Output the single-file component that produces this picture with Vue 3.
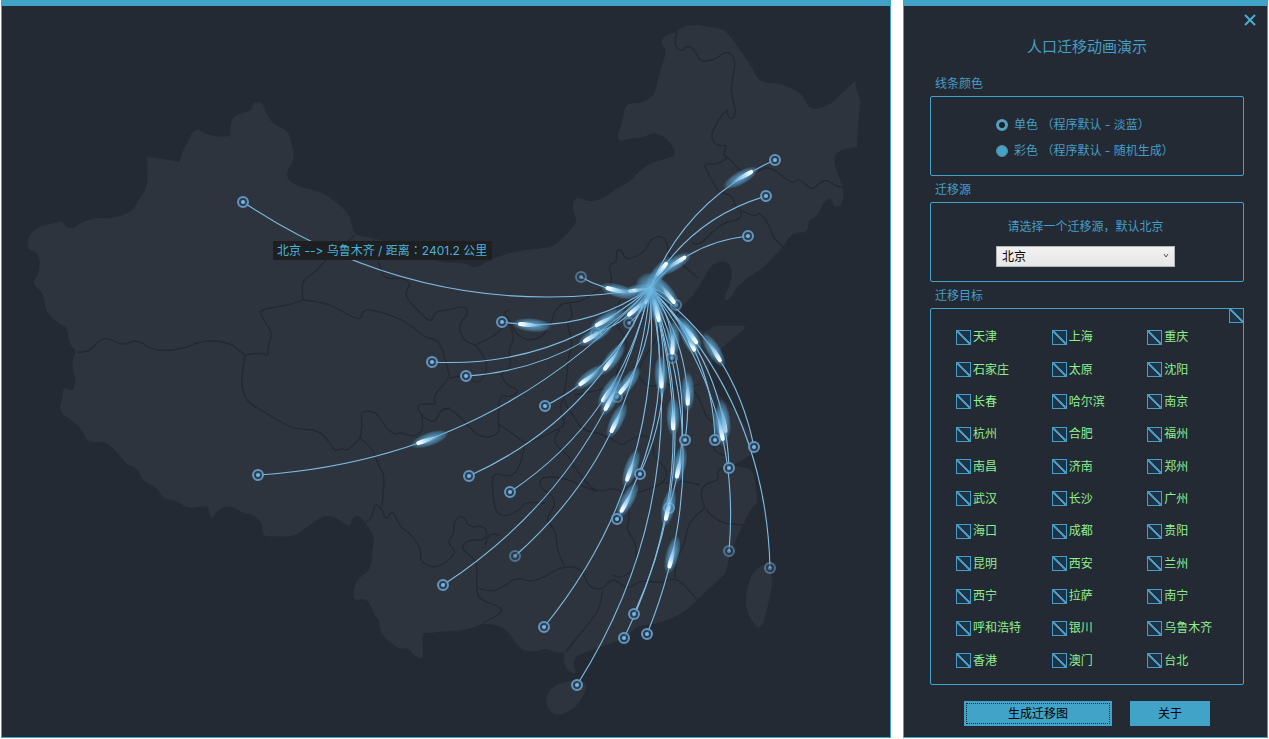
<script setup>
import { ref } from 'vue'

const ORIGIN = [650, 288]

// Turns "x,y x,y ..." into a softly rounded path through the segment midpoints.
function smooth(text, closed = false) {
  const p = text.trim().split(/\s+/).map((s) => s.split(',').map(Number))
  const mid = (a, b) => [(a[0] + b[0]) / 2, (a[1] + b[1]) / 2]
  if (closed) {
    const start = mid(p[p.length - 1], p[0])
    let d = `M${start}`
    p.forEach((pt, i) => {
      d += `Q${pt} ${mid(pt, p[(i + 1) % p.length])}`
    })
    return d + 'Z'
  }
  let d = `M${p[0]}`
  for (let i = 1; i < p.length - 1; i++) d += `Q${p[i]} ${mid(p[i], p[i + 1])}`
  return d + `L${p[p.length - 1]}`
}

const land = [
  `27,250 28,237 37,227 50,224 63,221 65,227 72,229 80,223 97,217 107,219 125,215 135,208 140,197 147,188 148,172 147,157 147,157 165,159 180,162 180,162 182,152 188,142 191,134 197,128 205,134 218,137 230,136 230,136 231,118 242,113 251,111 253,103 258,102 263,103 266,113 273,124 283,128 289,133 291,143 294,153 293,163 287,170 287,180 300,187 323,192 337,203 348,213 352,225 355,235 373,238 395,244 420,256 445,263 466,263 475,269 493,258 520,250 553,248 568,233 578,220 573,213 573,200 580,197 588,202 603,199 617,188 630,182 640,170 653,162 673,157 676,152 670,143 665,137 653,132 643,138 630,138 620,142 617,135 622,125 625,103 643,103 655,95 658,78 662,65 667,50 660,43 665,35 677,32 682,27 695,24 707,27 722,28 732,38 740,50 752,67 760,83 780,83 802,93 807,105 813,110 830,105 842,93 855,81 855,81 857,93 861,100 858,123 857,147 857,147 838,150 833,160 840,180 844,188 842,207 833,207 832,198 825,200 817,217 808,220 808,233 793,232 783,247 773,257 763,268 747,278 737,287 728,302 723,298 730,285 733,273 728,262 718,261 710,267 703,280 697,290 687,302 680,308 680,318 693,328 707,333 713,325 730,326 746,325 744,330 727,343 717,353 708,368 708,380 718,395 735,410 745,425 754,440 756,450 747,458 730,466 753,468 755,483 758,503 752,507 743,525 737,537 728,560 727,572 713,585 697,600 687,610 673,618 653,625 637,625 627,637 607,645 583,653 575,657 573,665 577,673 570,673 563,663 565,652 557,653 545,648 537,652 520,650 512,637 503,626 483,623 468,630 453,631 437,632 430,633 422,633 423,647 423,660 413,655 408,647 400,650 380,635 380,620 375,617 368,598 354,601 353,590 358,578 371,570 372,550 375,537 365,522 358,515 352,518 350,527 342,522 327,513 307,527 293,537 280,536 262,537 263,525 255,515 245,514 230,505 217,510 212,521 209,513 208,505 187,509 177,500 163,499 157,487 143,482 137,467 127,465 117,452 105,441 87,443 80,425 58,412 63,397 63,386 73,392 76,380 72,367 73,357 77,352 68,342 68,327 57,323 45,310 44,293 31,283 40,273 39,252`,
  `577,680 588,684 583,697 575,708 560,716 548,711 545,697 553,686 565,682`,
  `768,563 773,580 770,597 762,629 754,625 745,608 747,585 756,568`,
].map((s) => smooth(s, true))

const borders = [
  `77,352 88,353 97,342 107,337 122,346 137,339 155,352 187,348 200,341 227,341 245,355`,
  `245,355 262,352 268,357 268,345 273,333 260,315 262,309 285,306 303,300`,
  `303,300 301,285 307,277 318,270 327,258 340,248 355,235`,
  `303,300 325,302 345,313 361,321 363,308 385,313 407,322 425,338 440,340 448,370 450,378 432,397 438,405 416,403 420,415 435,424 440,410 450,408`,
  `373,238 378,262 385,280 400,277 412,283 403,295 425,318 432,322 435,311 450,310 463,306 470,312 458,325 463,340 475,345`,
  `245,355 242,372 242,390 248,403 265,412 280,422 295,429 318,430 328,440 335,452 341,448 348,451 360,438`,
  `360,438 363,423 360,411 376,411 385,427 395,435 401,432 412,437 423,432 422,415`,
  `360,438 373,448 378,465 385,475 382,505`,
  `365,522 372,520 374,504 381,506 386,522 392,509 400,527 410,533 422,550 419,560 433,569 450,560 456,550 447,543 455,532 453,522 463,514 469,528 485,525 488,540 466,540 461,550 478,560 476,590 480,600 503,608 500,614 483,623`,
  `677,32 673,45 682,52 687,45 695,50 700,62 715,60 727,50 736,60 732,80 731,95 736,110 733,120 727,116 728,108 718,120 710,137 717,146 728,145 722,155 732,160 738,170 752,176 766,166 778,172 793,185 798,177 812,191 820,182 828,180 835,186 844,188`,
  `728,157 718,166 702,162 712,180 718,192 732,195 736,208 742,211 740,220 725,222 712,232 700,245 692,243`,
  `742,211 756,218 759,211 770,226 772,236 783,247`,
  `570,305 574,318 566,320 573,345 568,357 567,380 562,400 575,418 582,430 600,433 622,445`,
  `608,290 613,282 608,265 617,262 616,250 622,250 626,261 645,252 650,240 661,235 668,243 667,255 683,265 698,278`,
  `613,284 600,288 585,300 570,303 563,303 555,310 551,325 538,341 518,338 508,318 503,312 510,310`,
  `475,345 487,340 502,330 508,320 515,338 508,350 512,368 500,372 506,385 520,390 510,398 500,393 498,420 500,435 480,438 468,425 458,415 447,407 440,412`,
  `475,345 484,355 488,370 478,385 465,375 450,378`,
  `497,423 515,435 525,444 540,438 556,430 566,425 560,410 562,400`,
  `525,444 522,462 512,478 493,472 492,487 495,512 505,517 520,510 525,502 545,503`,
  `560,430 550,440 568,455 575,468 590,487 600,493 580,485 562,477 540,477 540,488 552,495 556,505 545,520 556,530 557,550 564,565`,
  `580,485 600,493 614,487 628,496 640,492 665,483 668,470 652,455 655,448 645,432 622,445`,
  `628,500 630,520 626,530 637,543 635,570 620,578 612,575`,
  `478,588 490,592 500,589 517,577 530,582 545,577 562,566 582,568 588,587 603,590 612,577 628,590 640,580 660,583 675,578 685,585 697,600`,
  `603,590 600,608 590,622 575,640 566,652`,
  `675,578 675,562 685,543 688,525 698,513 706,509 700,495 704,484 720,480 716,470 730,467`,
  `706,509 716,523 743,525`,
  `665,483 680,480 700,485`,
  `690,385 700,398 706,418 716,424 718,440 712,450 725,456`,
  `680,310 668,322 655,340 640,365 638,378 650,388 665,382 680,390 700,384`,
  `620,300 612,320 625,335 628,350 618,365 615,385 600,390 575,395`,
  `485,545 488,533 500,535`,
].map((s) => smooth(s))

// Every arc bulges to the left of its travel direction, with one shared curvature.
const BULGE = 0.1
const routeData = [
  ['乌鲁木齐', 243, 202, 0.05], ['拉萨', 258, 475, 0.64], ['呼和浩特', 581, 277, 0.63],
  ['银川', 502, 322, 0.9], ['西宁', 432, 362, 0.28], ['兰州', 466, 376, 0.41],
  ['西安', 545, 406, 0.76], ['成都', 469, 476, 0.35], ['重庆', 510, 492, 0.49],
  ['贵阳', 515, 556, 0.49], ['昆明', 443, 585, 0.35], ['南宁', 544, 627, 0.54],
  ['海口', 577, 685, 0.24], ['长沙', 617, 519, 0.97], ['武汉', 640, 474, 0.18],
  ['郑州', 617, 397, 0.97], ['广州', 634, 614, 0.71], ['澳门', 624, 638, 0.4],
  ['香港', 647, 634, 0.81], ['南昌', 669, 508, 0.87], ['合肥', 685, 440, 0.79],
  ['济南', 672, 358, 0.96], ['南京', 715, 440, 0.46], ['杭州', 729, 468, 0.83],
  ['福州', 729, 551, 0.61], ['上海', 754, 447, 0.53], ['台北', 770, 568, 0.23],
  ['沈阳', 748, 236, 0.42], ['长春', 766, 196, 0.2], ['哈尔滨', 775, 160, 0.87],
  ['天津', 676, 305, 0.95], ['石家庄', 629, 323, 0.4], ['太原', 596, 333, 0.5],
]
const faint = ['福州', '台北', '石家庄', '太原', '天津', '济南', '郑州', '呼和浩特', '贵阳']

const routes = routeData.map(([name, x, y, t]) => {
  const [ox, oy] = ORIGIN
  const dx = x - ox
  const dy = y - oy
  const cx = ox + dx / 2 + dy * BULGE * 2
  const cy = oy + dy / 2 - dx * BULGE * 2
  const u = 1 - t
  const hx = u * u * ox + 2 * u * t * cx + t * t * x
  const hy = u * u * oy + 2 * u * t * cy + t * t * y
  const tx = u * (cx - ox) + t * (x - cx)
  const ty = u * (cy - oy) + t * (y - cy)
  const angle = (Math.atan2(ty, tx) * 180) / Math.PI
  const scale = Math.min(1, Math.hypot(hx - ox, hy - oy) / 34 + 0.2)
  return {
    name,
    x,
    y,
    faint: faint.includes(name),
    d: `M${ox},${oy}Q${cx},${cy} ${x},${y}`,
    comet: `translate(${hx} ${hy}) rotate(${angle}) scale(${scale})`,
  }
})

const color = ref('single')
const source = ref('北京')
const all = ref(false)
const chosen = ref([])
const cities = [
  '天津', '上海', '重庆', '石家庄', '太原', '沈阳', '长春', '哈尔滨', '南京',
  '杭州', '合肥', '福州', '南昌', '济南', '郑州', '武汉', '长沙', '广州',
  '海口', '成都', '贵阳', '昆明', '西安', '兰州', '西宁', '拉萨', '南宁',
  '呼和浩特', '银川', '乌鲁木齐', '香港', '澳门', '台北',
]
const toggleAll = () => {
  chosen.value = all.value ? [...cities] : []
}
</script>

<template>
  <div class="app">
    <main class="window map-window">
      <svg class="map" viewBox="2 6 888 731" role="img" aria-label="人口迁移图">
        <defs>
          <radialGradient id="glow">
            <stop offset="0" stop-color="#7cc4ee" stop-opacity="0.75" />
            <stop offset="0.5" stop-color="#62addb" stop-opacity="0.6" />
            <stop offset="0.8" stop-color="#5299c4" stop-opacity="0.4" />
            <stop offset="1" stop-color="#4f93bd" stop-opacity="0" />
          </radialGradient>
          <linearGradient id="core" x1="0" x2="1">
            <stop offset="0" stop-color="#8fd2f8" stop-opacity="0" />
            <stop offset="0.55" stop-color="#b4e2fc" stop-opacity="0.8" />
            <stop offset="0.8" stop-color="#e6f7ff" />
            <stop offset="1" stop-color="#ffffff" />
          </linearGradient>
        </defs>
        <path v-for="(d, i) in land" :key="'l' + i" :d="d" class="land" />
        <path v-for="(d, i) in borders" :key="'b' + i" :d="d" class="border" />
        <path v-for="r in routes" :key="'r' + r.name" :d="r.d" class="route" />
        <g v-for="r in routes" :key="'p' + r.name" :class="['point', { faint: r.faint }]">
          <circle :cx="r.x" :cy="r.y" r="5" class="ring" />
          <circle :cx="r.x" :cy="r.y" r="2" class="dot" />
        </g>
        <g v-for="r in routes" :key="'c' + r.name" :transform="r.comet">
          <ellipse cx="-14" cy="0" rx="20" ry="7" fill="url(#glow)" />
          <path d="M-26 0Q-10 -3 -2 -2A2 2 0 0 1 -2 2Q-10 3 -26 0Z" fill="url(#core)" />
        </g>
        <circle cx="650" cy="287" r="15" fill="url(#glow)" />
        <rect x="273" y="241" width="219" height="19" class="tip" />
        <text x="277" y="255" class="tip-text">北京 --&gt; 乌鲁木齐 / 距离<tspan class="colon">：</tspan>2401.2 公里</text>
      </svg>
    </main>

    <aside class="window side">
      <button type="button" class="close" aria-label="关闭">
        <svg viewBox="0 0 12 12" width="12" height="12"><path d="M1 1L11 11M11 1L1 11" /></svg>
      </button>
      <h1>人口迁移动画演示</h1>

      <h2>线条颜色</h2>
      <section class="box colors">
        <label><input v-model="color" type="radio" name="color" value="single" />单色 （程序默认 - 淡蓝）</label>
        <label><input v-model="color" type="radio" name="color" value="multi" />彩色 （程序默认 - 随机生成）</label>
      </section>

      <h2>迁移源</h2>
      <section class="box source">
        <label for="source">请选择一个迁移源，默认北京</label>
        <div class="select">
          <select id="source" v-model="source">
            <option>北京</option>
            <option v-for="c in cities" :key="c">{{ c }}</option>
          </select>
          <svg class="chevron" viewBox="0 0 6 6" width="6" height="6"><path d="M1 1L3 4L5 1" /></svg>
        </div>
      </section>

      <h2>迁移目标</h2>
      <section class="box targets">
        <input v-model="all" type="checkbox" class="all" aria-label="全选" @change="toggleAll" />
        <label v-for="c in cities" :key="c"><input v-model="chosen" type="checkbox" :value="c" />{{ c }}</label>
      </section>

      <footer>
        <button type="button" class="action primary">生成迁移图</button>
        <button type="button" class="action">关于</button>
      </footer>
    </aside>
  </div>
</template>

<style>
body {
  margin: 0;
  background: #fff;
}
</style>

<style scoped>
.app {
  box-sizing: border-box;
  display: flex;
  gap: 12px;
  min-height: 100vh;
  padding: 0 1px 1px;
  font: 12px/18px Inter, "Noto Sans CJK SC", sans-serif;
  font-variant-ligatures: none;
  color: #469dc6;
}
.window {
  box-sizing: border-box;
  background: #232a33;
  border: 1px solid #42a3c9;
  border-top-width: 6px;
}
.map-window {
  flex: 1;
  min-width: 0;
  display: flex;
}
.map {
  flex: 1;
  width: 100%;
  min-width: 0;
}
.land {
  fill: #2e343d;
}
.border {
  fill: none;
  stroke: #222932;
  stroke-width: 1.3;
}
.route {
  fill: none;
  stroke: #7dbde6;
  stroke-width: 1.1;
}
.ring {
  fill: #25435f;
  fill-opacity: 0.8;
  stroke: #6d9fc8;
  stroke-opacity: 0.9;
  stroke-width: 2;
}
.dot {
  fill: #7db2da;
}
.faint {
  opacity: 0.65;
}
.tip {
  fill: #1e1f20;
}
.tip-text {
  fill: #48b4dc;
  font-size: 12px;
}
.colon {
  font-family: "Noto Sans CJK TC", sans-serif;
}
.side {
  position: relative;
  width: 365px;
  flex: none;
  display: flex;
  flex-direction: column;
  padding: 31px 23px 11px 26px;
}
.close {
  position: absolute;
  top: 8px;
  right: 11px;
  width: 12px;
  height: 12px;
  padding: 0;
  border: 0;
  background: none;
}
.close svg {
  display: block;
  fill: none;
  stroke: #4fabd2;
  stroke-width: 2;
}
h1 {
  margin: 0 0 13px;
  font-size: 15px;
  line-height: 20px;
  font-weight: 400;
  text-align: center;
}
h2 {
  margin: 5px 0 3px 5px;
  font-size: 12px;
  line-height: 18px;
  font-weight: 400;
}
.box {
  box-sizing: border-box;
  border: 1px solid #42a3c9;
  border-radius: 2px;
  min-height: 80px;
}
.colors {
  display: flex;
  flex-direction: column;
  justify-content: center;
  gap: 8px;
  padding: 4px 0 0 65px;
}
.colors label {
  display: flex;
  align-items: center;
  gap: 6px;
}
input {
  appearance: none;
  box-sizing: border-box;
  flex: none;
  margin: 0;
}
input[type="radio"] {
  width: 12px;
  height: 12px;
  border: 1px solid #5d8798;
  border-radius: 50%;
  background: #42a3c9;
}
input[type="radio"]:checked {
  border: 3px solid #53a0bd;
  background: #1a2029;
}
.source {
  display: flex;
  flex-direction: column;
  align-items: center;
  gap: 10px;
  padding: 15px 3px 13px 0;
}
.select {
  position: relative;
  width: 179px;
}
select {
  appearance: none;
  display: block;
  box-sizing: border-box;
  width: 100%;
  height: 21px;
  padding: 0 5px;
  border: 1px solid #b4b4b4;
  border-radius: 0;
  background: linear-gradient(#f2f2f2, #e6e6e6);
  color: #000;
  font: inherit;
}
.chevron {
  position: absolute;
  right: 6px;
  top: 7px;
  fill: none;
  stroke: #555;
  pointer-events: none;
}
.targets {
  position: relative;
  flex: 1;
  display: grid;
  grid-template-columns: repeat(3, 1fr);
  grid-auto-rows: 1fr;
  padding: 12px 0 7px 25px;
  color: #90ee90;
}
.targets label {
  display: flex;
  align-items: center;
  gap: 2px;
  white-space: nowrap;
}
input[type="checkbox"] {
  width: 15px;
  height: 15px;
  border: 1px solid #469dc6;
  background: linear-gradient(45deg, #1d3446 43%, #4f97bf 46%, #4f97bf 54%, #1d3446 57%);
}
.targets .all {
  position: absolute;
  top: -1px;
  right: -1px;
}
footer {
  display: flex;
  justify-content: center;
  gap: 18px;
  margin-top: 16px;
}
.action {
  position: relative;
  width: 80px;
  height: 25px;
  padding: 0;
  border: 0;
  background: #42a3c9;
  color: #000;
  font: inherit;
}
.primary {
  width: 148px;
  outline: 1px dotted #123;
  outline-offset: -3px;
}
</style>
